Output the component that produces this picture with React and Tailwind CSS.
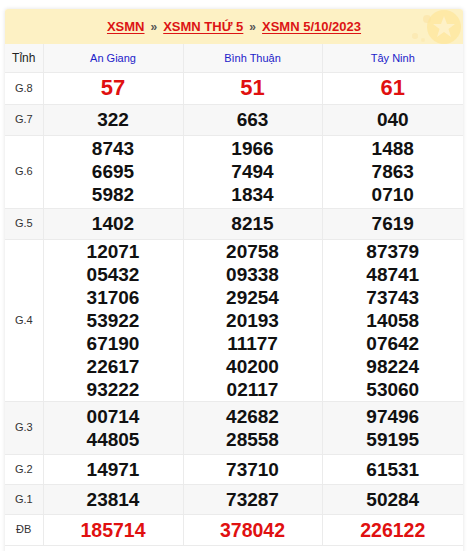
import React from 'react';

const provinces = ['An Giang', 'Bình Thuận', 'Tây Ninh'];

const rows = [
  { label: 'G.8', h: 'h-[32px]', big: true, vals: [['57'], ['51'], ['61']] },
  { label: 'G.7', h: 'h-[31px]', vals: [['322'], ['663'], ['040']] },
  {
    label: 'G.6',
    h: 'h-[73px]',
    vals: [
      ['8743', '6695', '5982'],
      ['1966', '7494', '1834'],
      ['1488', '7863', '0710'],
    ],
  },
  { label: 'G.5', h: 'h-[31px]', vals: [['1402'], ['8215'], ['7619']] },
  {
    label: 'G.4',
    h: 'h-[162px]',
    vals: [
      ['12071', '05432', '31706', '53922', '67190', '22617', '93222'],
      ['20758', '09338', '29254', '20193', '11177', '40200', '02117'],
      ['87379', '48741', '73743', '14058', '07642', '98224', '53060'],
    ],
  },
  {
    label: 'G.3',
    h: 'h-[53px]',
    vals: [
      ['00714', '44805'],
      ['42682', '28558'],
      ['97496', '59195'],
    ],
  },
  { label: 'G.2', h: 'h-[30px]', vals: [['14971'], ['73710'], ['61531']] },
  { label: 'G.1', h: 'h-[30px]', vals: [['23814'], ['73287'], ['50284']] },
  { label: 'ĐB', h: 'h-[31px]', db: true, vals: [['185714'], ['378042'], ['226122']] },
];

function StarBadge() {
  return (
    <svg className="absolute right-0 top-0" width="70" height="36" viewBox="0 0 70 36">
      <circle cx="34" cy="10" r="4" fill="#fbe3a4" opacity="0.6" />
      <circle cx="22" cy="27" r="3" fill="#fbe3a4" opacity="0.5" />
      <circle cx="30" cy="31" r="2" fill="#fbe3a4" opacity="0.4" />
      <circle cx="51" cy="18" r="17" fill="#fde59a" opacity="0.7" />
      <path
        d="M51 7 L54 15 L62 15 L55.5 20 L58 28 L51 23 L44 28 L46.5 20 L40 15 L48 15 Z"
        fill="#fef2cc"
        opacity="0.85"
      />
    </svg>
  );
}

export default function App() {
  return (
    <div className="min-h-screen bg-white font-['Liberation_Sans',Arial,sans-serif]">
      <div className="ml-[5px] pt-[9px] w-[458px]">
        <div className="rounded-t-[3px] shadow-[0_0_4px_rgba(0,0,0,0.12)] bg-white pb-[10px]">
          <div className="relative h-[35px] bg-[#fdf1c4] rounded-t-[3px] flex items-center justify-center text-[13px] font-bold overflow-hidden">
            <StarBadge />
            <span className="relative text-[#dc1414] underline underline-offset-2">XSMN</span>
            <span className="relative mx-[6px] text-[#555] text-[12px]">»</span>
            <span className="relative text-[#dc1414] underline underline-offset-2">XSMN THỨ 5</span>
            <span className="relative mx-[6px] text-[#555] text-[12px]">»</span>
            <span className="relative text-[#dc1414] underline underline-offset-2">XSMN 5/10/2023</span>
          </div>
          <table className="w-[458px] table-fixed border-collapse">
            <colgroup>
              <col className="w-[38px]" />
              <col className="w-[140px]" />
              <col className="w-[139px]" />
              <col className="w-[141px]" />
            </colgroup>
            <tbody>
              <tr className="h-[28px] bg-[#f8f8f8]">
                <td className="border border-[#ebebeb] border-t-0 border-l-0 text-center text-[12px] text-[#222]">Tỉnh</td>
                {provinces.map((p) => (
                  <td key={p} className="border border-[#ebebeb] border-t-0 last:border-r-0 text-center text-[11px] text-[#1c22c9]">
                    {p}
                  </td>
                ))}
              </tr>
              {rows.map((r, i) => (
                <tr key={r.label} className={`${r.h} ${i % 2 === 1 ? 'bg-[#f7f7f7]' : 'bg-white'}`}>
                  <td className="border border-[#ebebeb] border-l-0 text-center text-[11px] text-[#333]">{r.label}</td>
                  {r.vals.map((v, j) => (
                    <td
                      key={j}
                      className={`border border-[#ebebeb] last:border-r-0 text-center font-bold ${
                        r.big
                          ? 'text-[22px] text-[#e01010] leading-[24px]'
                          : r.db
                          ? 'text-[19.5px] text-[#e01010] leading-[24px]'
                          : 'text-[19px] text-[#111] leading-[23px]'
                      }`}
                    >
                      {v.map((n) => (
                        <div key={n}>{n}</div>
                      ))}
                    </td>
                  ))}
                </tr>
              ))}
            </tbody>
          </table>
        </div>
      </div>
    </div>
  );
}
